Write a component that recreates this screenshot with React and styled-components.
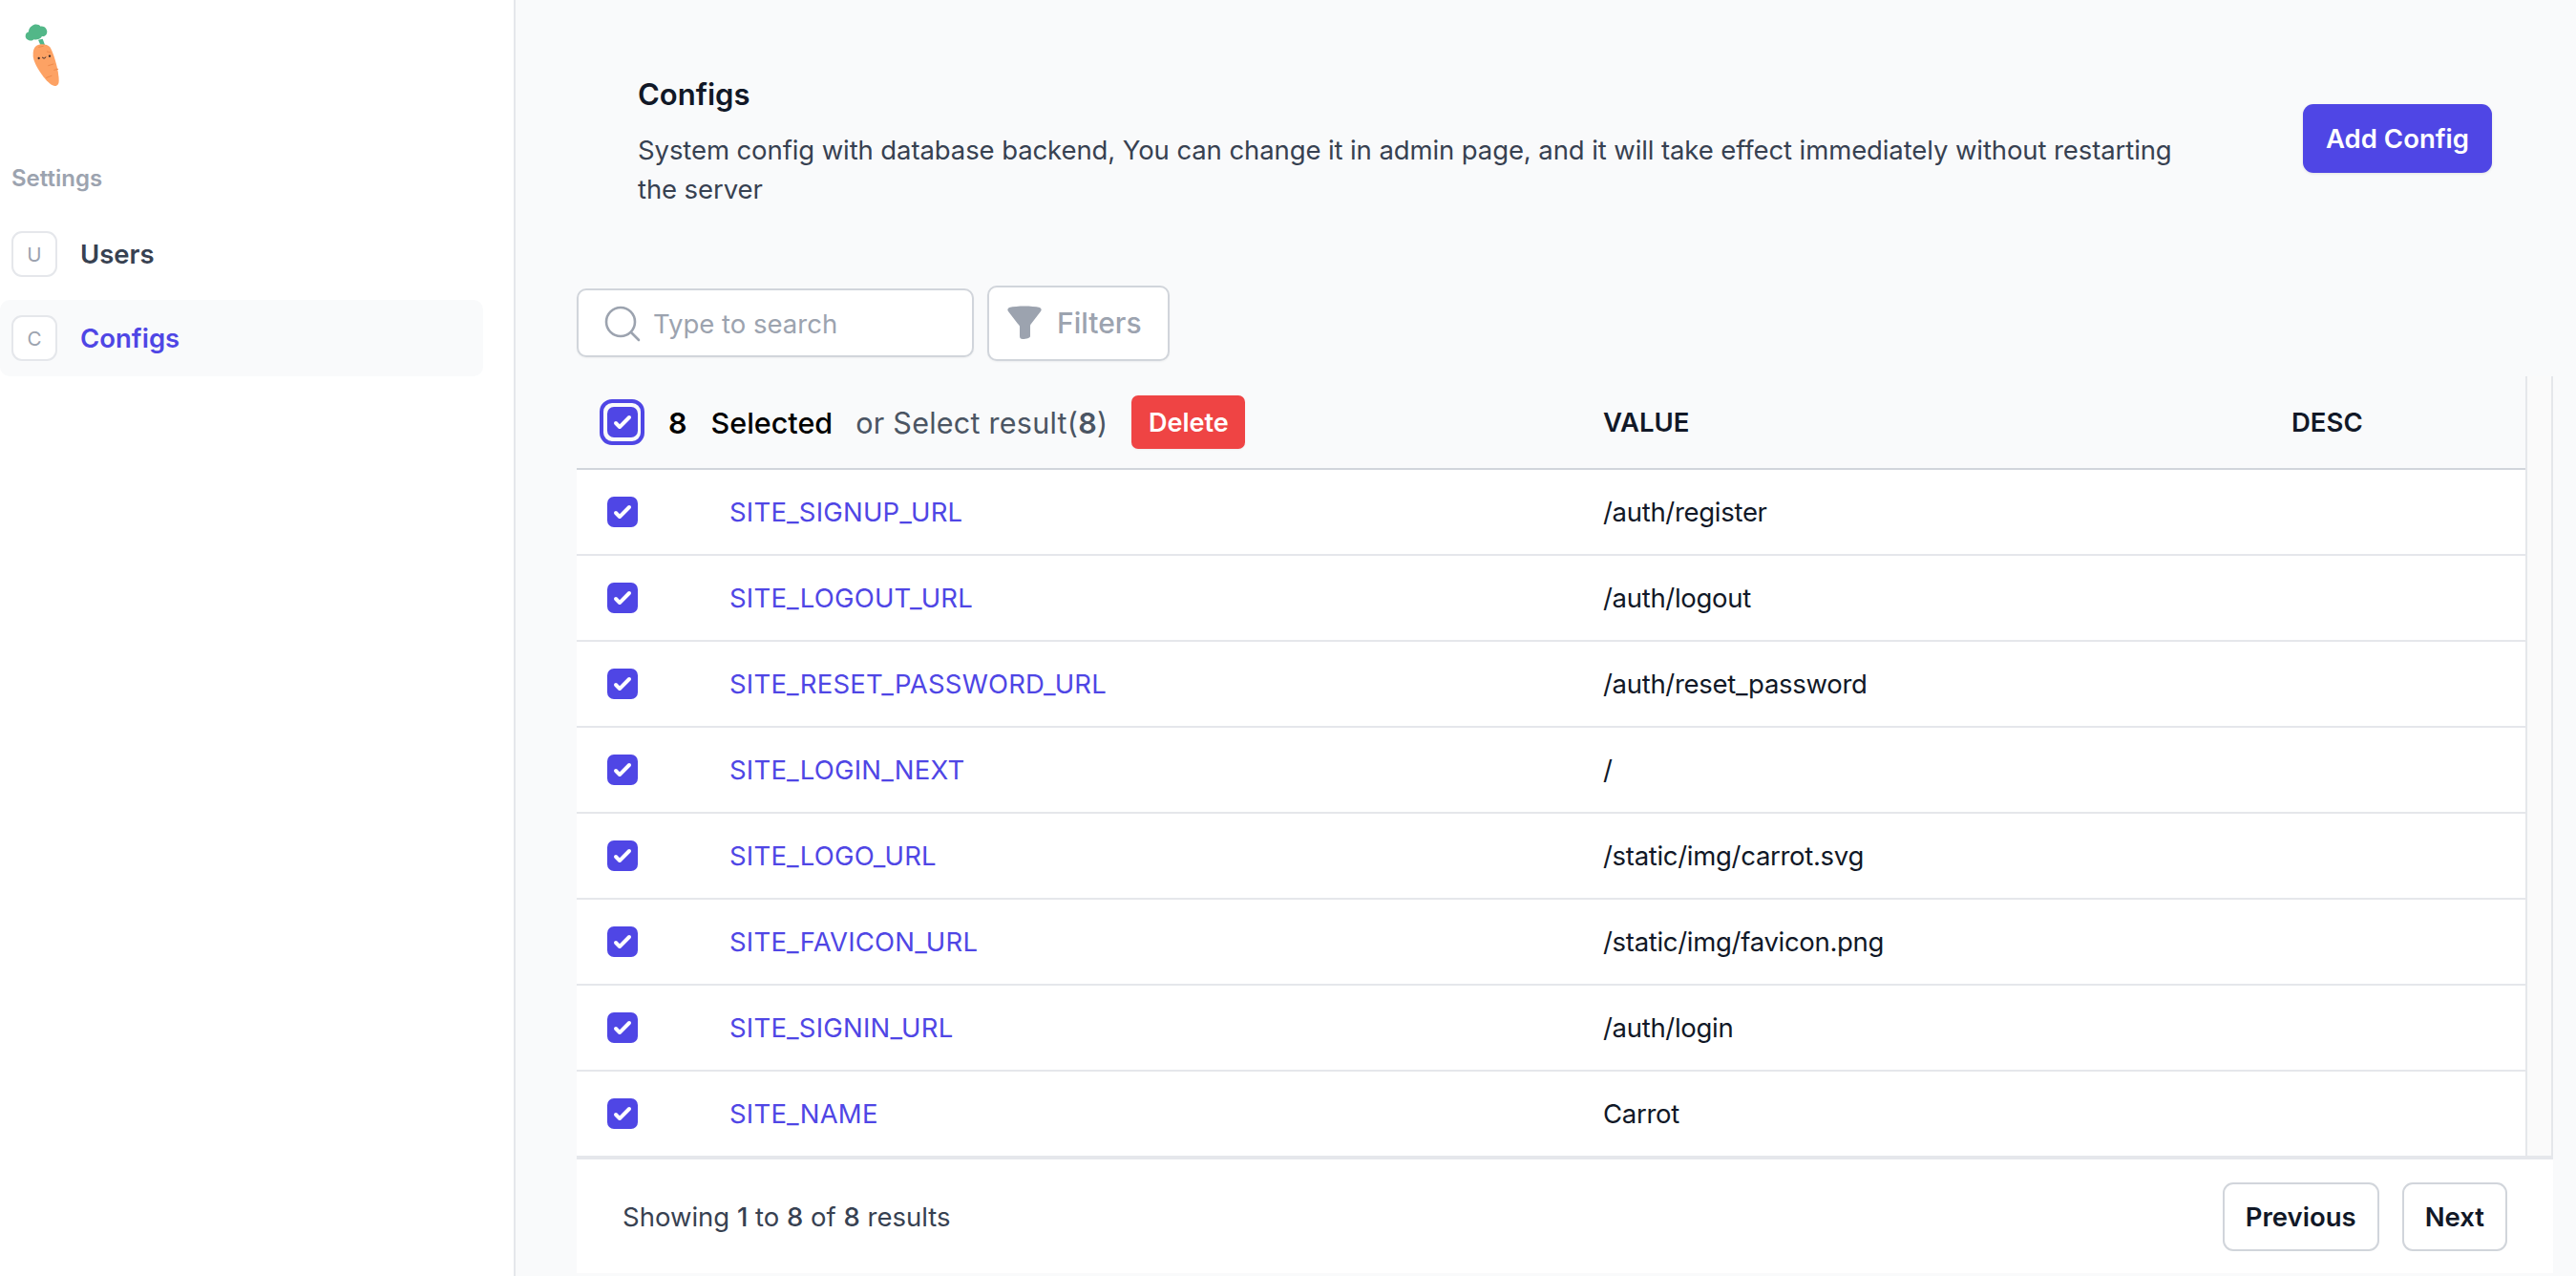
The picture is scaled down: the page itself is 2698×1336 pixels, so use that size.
import React from 'react';
import styled, { createGlobalStyle } from 'styled-components';

const rows = [
	['SITE_SIGNUP_URL', '/auth/register'],
	['SITE_LOGOUT_URL', '/auth/logout'],
	['SITE_RESET_PASSWORD_URL', '/auth/reset_password'],
	['SITE_LOGIN_NEXT', '/'],
	['SITE_LOGO_URL', '/static/img/carrot.svg'],
	['SITE_FAVICON_URL', '/static/img/favicon.png'],
	['SITE_SIGNIN_URL', '/auth/login'],
	['SITE_NAME', 'Carrot'],
];

const Carrot = () => (
	<svg width="90" height="90" viewBox="0 0 270 270">
		<path d="M90 95 L104 92 L113 116 L100 118 Z" fill="#4fb68a" />
		<path
			d="M70 52 C78 44 92 46 98 53 C108 50 118 60 118 70 C118 80 110 86 102 84 C96 94 84 96 76 94 C70 102 50 96 50 84 C50 76 54 72 60 70 C60 62 64 56 70 52 Z"
			fill="#52b788"
		/>
		<path
			d="M84 114 C96 106 118 108 127 118 C138 136 155 190 155 224 C155 240 144 242 135 238 C112 226 76 172 74 146 C73 132 76 120 84 114 Z"
			fill="#fda264"
		/>
		<path d="M92 118 l14 -3 M118 132 l10 3 M122 176 l16 -5 M116 214 l16 -6 M140 190 l12 -3" stroke="#ee8a4c" strokeWidth="3" strokeLinecap="round" />
		<circle cx="92" cy="153" r="3.5" fill="#3a2b2b" />
		<circle cx="126" cy="146" r="3.5" fill="#3a2b2b" />
		<path d="M103 151 q5 7 11 -1" stroke="#3a2b2b" strokeWidth="3" fill="none" strokeLinecap="round" />
	</svg>
);

const Check = () => (
	<svg width="32" height="32" viewBox="0 0 16 16" fill="#fff">
		<path d="M12.207 4.793a1 1 0 010 1.414l-5 5a1 1 0 01-1.414 0l-2-2a1 1 0 011.414-1.414L6.5 9.086l4.293-4.293a1 1 0 011.414 0z" />
	</svg>
);

const SearchIcon = () => (
	<svg width="38" height="38" viewBox="0 0 38 38" fill="none" stroke="#9ca3af" strokeWidth="2.6" strokeLinecap="round">
		<circle cx="17" cy="17" r="15" />
		<path d="M28 28 L36 36" />
	</svg>
);

const FunnelIcon = () => (
	<svg width="36" height="36" viewBox="0 0 36 36" fill="#9ca3af">
		<path d="M2 2 C10 0 26 0 34 2 C36 3 36 5 35 6 L25 19 C24 20 24 21 24 22 L24 32 C24 34 20 35 16 35 C14 35 13 34 13 32 L13 22 C13 21 12 20 11 19 L1 6 C0 5 0 3 2 2 Z" />
	</svg>
);

const App = () => (
	<>
		<GlobalStyle />
		<Layout>
			<Sidebar>
				<Logo>
					<Carrot />
				</Logo>
				<SectionLabel>Settings</SectionLabel>
				<Nav>
					<NavItem>
						<NavBadge>U</NavBadge>
						Users
					</NavItem>
					<NavItem $active>
						<NavBadge>C</NavBadge>
						Configs
					</NavItem>
				</Nav>
			</Sidebar>
			<Main>
				<Header>
					<div>
						<Title>Configs</Title>
						<Description>
							System config with database backend, You can change it in admin
							page, and it will take effect immediately without restarting the
							server
						</Description>
					</div>
					<AddButton>Add Config</AddButton>
				</Header>
				<Toolbar>
					<SearchBox>
						<SearchIcon />
						<SearchInput placeholder="Type to search" />
					</SearchBox>
					<FilterButton>
						<FunnelIcon />
						Filters
					</FilterButton>
				</Toolbar>
				<TableFrame>
					<TableArea>
						<HeadRow>
							<NameCol>
								<SelectAll>
									<CheckBox>
										<Check />
									</CheckBox>
								</SelectAll>
								<Count>8</Count>
								<SelectedText>Selected</SelectedText>
								<SelectResult>
									or Select result(<strong>8</strong>)
								</SelectResult>
								<DeleteButton>Delete</DeleteButton>
							</NameCol>
							<ValueCol>
								<HeadLabel>VALUE</HeadLabel>
							</ValueCol>
							<HeadLabel>DESC</HeadLabel>
						</HeadRow>
						{rows.map(([name, value], index) => (
							<Row key={name} $last={index === rows.length - 1}>
								<NameCol>
									<CheckBox $row>
										<Check />
									</CheckBox>
									<NameLink>{name}</NameLink>
								</NameCol>
								<ValueCol>{value}</ValueCol>
							</Row>
						))}
					</TableArea>
					<ScrollTrack />
				</TableFrame>
				<Footer>
					<Summary>
						Showing <b>1</b> to <b>8</b> of <b>8</b> results
					</Summary>
					<Pager>
						<PageButton>Previous</PageButton>
						<PageButton>Next</PageButton>
					</Pager>
				</Footer>
			</Main>
		</Layout>
	</>
);

const GlobalStyle = createGlobalStyle`
	html, body {
		margin: 0;
		height: 1336px;
		overflow: hidden;
		background: #f9fafb;
		font-family: Inter, 'Liberation Sans', sans-serif;
	}
	* {
		box-sizing: border-box;
	}
`;

const Layout = styled.div`
	display: flex;
	height: 1336px;
`;

const Sidebar = styled.aside`
	width: 540px;
	flex-shrink: 0;
	background: #fff;
	border-right: 2px solid #e5e7eb;
	padding-right: 32px;
`;

const Logo = styled.div`
	height: 90px;
	margin: 10px 0 0 10px;
	line-height: 0;
`;

const SectionLabel = styled.div`
	margin: 70px 0 0 12px;
	font-size: 24px;
	line-height: 34px;
	font-weight: 600;
	color: #9ca3af;
`;

const Nav = styled.nav`
	display: flex;
	flex-direction: column;
	gap: 8px;
	margin-top: 22px;
`;

const NavItem = styled.a`
	display: flex;
	align-items: center;
	gap: 24px;
	height: 80px;
	padding-left: 12px;
	border-radius: 10px;
	font-size: 27.5px;
	font-weight: 600;
	color: ${(p) => (p.$active ? '#4f46e5' : '#374151')};
	background: ${(p) => (p.$active ? '#f9fafb' : 'transparent')};
`;

const NavBadge = styled.span`
	display: flex;
	align-items: center;
	justify-content: center;
	width: 48px;
	height: 48px;
	border: 2px solid #e5e7eb;
	border-radius: 11px;
	background: #fff;
	font-size: 20.6px;
	font-weight: 400;
	color: #9ca3af;
`;

const Main = styled.main`
	flex: 1;
	min-width: 0;
	padding: 0 24px 3px 64px;
	display: flex;
	flex-direction: column;
`;

const Header = styled.header`
	display: flex;
	align-items: center;
	justify-content: space-between;
	height: 290px;
	padding: 0 64px 0 64px;
	gap: 60px;
	& > div {
		align-self: flex-start;
		padding-top: 78px;
	}
`;

const Title = styled.h1`
	margin: 0 0 18px;
	font-size: 31px;
	line-height: 41px;
	font-weight: 600;
	color: #111827;
`;

const Description = styled.p`
	margin: 0;
	width: 1640px;
	font-size: 27.5px;
	line-height: 41px;
	letter-spacing: -0.1px;
	color: #374151;
`;

const AddButton = styled.button`
	flex-shrink: 0;
	width: 198px;
	height: 72px;
	border: 0;
	border-radius: 11px;
	background: #4f46e5;
	color: #fff;
	font: 600 27.5px Inter, sans-serif;
	box-shadow: 0 1px 3px rgba(0, 0, 0, 0.1);
`;

const Toolbar = styled.div`
	display: flex;
	align-items: center;
	gap: 14px;
	height: 96px;
	margin-bottom: 8px;
`;

const SearchBox = styled.label`
	display: flex;
	align-items: center;
	gap: 11px;
	width: 416px;
	height: 72px;
	padding: 2px 0 0 27px;
	border: 2px solid #d1d5db;
	border-radius: 10px;
	background: #fff;
	box-shadow: 0 1px 2px rgba(0, 0, 0, 0.05);
`;

const SearchInput = styled.input`
	flex: 1;
	min-width: 0;
	border: 0;
	outline: 0;
	background: transparent;
	font: 400 27.5px Inter, sans-serif;
	&::placeholder {
		color: #9ca3af;
		opacity: 1;
	}
`;

const FilterButton = styled.button`
	display: flex;
	align-items: center;
	gap: 16px;
	width: 191px;
	height: 79px;
	padding: 0 0 0 19px;
	border: 2px solid #d1d5db;
	border-radius: 10px;
	background: #fff;
	color: #9ca3af;
	font: 500 30px Inter, sans-serif;
	box-shadow: 0 1px 2px rgba(0, 0, 0, 0.05);
`;

const TableFrame = styled.div`
	display: flex;
	width: 2070px;
`;

const TableArea = styled.div`
	flex: 1;
	min-width: 0;
`;

const ScrollTrack = styled.div`
	width: 29px;
	background: #fafafa;
	border-left: 2px solid #e5e7eb;
	border-right: 2px solid #e5e7eb;
`;

const HeadRow = styled.div`
	display: flex;
	align-items: center;
	height: 98px;
	border-bottom: 2px solid #d1d5db;
`;

const Row = styled.div`
	display: flex;
	align-items: center;
	height: ${(p) => (p.$last ? '88px' : '90px')};
	background: #fff;
	border-bottom: ${(p) => (p.$last ? '0' : '2px solid #e5e7eb')};
	font-size: 27.5px;
	letter-spacing: -0.3px;
	color: #111827;
`;

const NameCol = styled.div`
	display: flex;
	align-items: center;
	width: 1075px;
	padding-left: 32px;
`;

const ValueCol = styled.div`
	width: 721px;
`;

const CheckBox = styled.span`
	display: flex;
	flex-shrink: 0;
	width: 32px;
	height: 32px;
	border-radius: 7px;
	background: #4f46e5;
	margin-right: ${(p) => (p.$row ? '96px' : '0')};
`;

const SelectAll = styled.span`
	display: flex;
	flex-shrink: 0;
	align-items: center;
	justify-content: center;
	width: 47px;
	height: 48px;
	margin: 0 25px 0 -8px;
	border: 4px solid #4f46e5;
	border-radius: 13px;
`;

const Count = styled.span`
	font-size: 30.5px;
	font-weight: 600;
	color: #000;
`;

const SelectedText = styled.span`
	margin-left: 25px;
	font-size: 30.5px;
	font-weight: 500;
	color: #000;
`;

const SelectResult = styled.span`
	margin-left: 24px;
	font-size: 30.5px;
	letter-spacing: 0.25px;
	color: #4b5563;
	strong {
		font-weight: 600;
	}
`;

const DeleteButton = styled.button`
	width: 119px;
	height: 56px;
	margin-left: 25px;
	border: 0;
	border-radius: 7px;
	background: #ef4444;
	color: #fff;
	font: 600 27px Inter, sans-serif;
	box-shadow: 0 1px 2px rgba(0, 0, 0, 0.05);
`;

const HeadLabel = styled.span`
	font-size: 27.5px;
	font-weight: 600;
	color: #111827;
`;

const NameLink = styled.a`
	color: #4f46e5;
	letter-spacing: 0.2px;
`;

const Footer = styled.footer`
	display: flex;
	align-items: center;
	justify-content: space-between;
	width: 2070px;
	flex: 1;
	padding: 0 48px;
	background: #fff;
	border-top: 4px solid #e5e7eb;
`;

const Summary = styled.p`
	margin: 0;
	font-size: 27.5px;
	color: #374151;
	b {
		font-weight: 500;
	}
`;

const Pager = styled.div`
	display: flex;
	gap: 24px;
`;

const PageButton = styled.button`
	height: 72px;
	padding: 0 22px;
	border: 2px solid #d1d5db;
	border-radius: 11px;
	background: #fff;
	color: #111827;
	font: 600 27.5px Inter, sans-serif;
`;

export default App;
